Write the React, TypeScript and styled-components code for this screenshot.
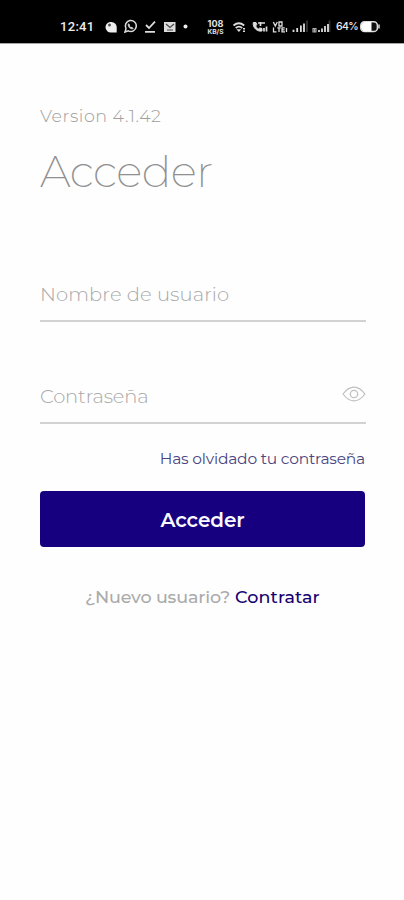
import React from "react";
import styled, { createGlobalStyle } from "styled-components";

const GlobalStyle = createGlobalStyle`
  * { box-sizing: border-box; }
  body { margin: 0; background: #fefefe; font-family: Montserrat, Inter, "Liberation Sans", sans-serif; }
`;
const Screen = styled.div`
  width: 404px;
  height: 900px;
  overflow: hidden;
  background: #fefefe;
`;
const StatusBar = styled.header`
  height: 44px;
  padding: 10px 23px 0 60px;
  background: #000;
  border-bottom: 1px solid #a5a5a5;
  color: #ededed;
  display: flex;
  align-items: flex-start;
`;
const Clock = styled.span`
  width: 35px;
  font: 500 13px/34px Roboto, sans-serif;
  letter-spacing: 0.3px;
`;
const StatusIcons = styled.svg`
  width: 235px;
  height: 33px;
  margin-left: 5px;
  flex: none;
`;
const StatusPercent = styled.span`
  width: 24px;
  margin-left: 1px;
  font: 500 10.5px/34px Inter, sans-serif;
  letter-spacing: -0.6px;
`;
const BatteryIcon = styled.svg`
  width: 21px;
  height: 33px;
  flex: none;
`;
const Main = styled.main`
  padding: 60px 38px 0 40px;
`;
const Version = styled.p`
  margin: 0;
  height: 24px;
  font-size: 17.5px;
  font-weight: 300;
  line-height: 24px;
  letter-spacing: 0.52px;
  color: #a0a0a0;
`;
const Title = styled.h1`
  margin: 11px 0 0;
  height: 64px;
  font-size: 44px;
  font-weight: 200;
  line-height: 64px;
  letter-spacing: -0.55px;
  color: #909090;
`;
const Field = styled.div<{ $gap: number }>`
  display: flex;
  align-items: center;
  justify-content: space-between;
  height: 57px;
  margin-top: ${(p) => p.$gap}px;
  padding-top: 2px;
  border-bottom: 2px solid #d2d2d2;
`;
const Label = styled.label<{ $spacing: number }>`
  font-size: 19.5px;
  font-weight: 300;
  line-height: 26px;
  letter-spacing: ${(p) => p.$spacing}px;
  color: #a8a8a8;
`;
const EyeIcon = styled.svg`
  width: 24px;
  height: 18px;
  margin: -3px 0 0;
`;
const Forgot = styled.a`
  display: block;
  margin-top: 23px;
  height: 24px;
  padding-right: 1px;
  text-align: right;
  font-size: 15.5px;
  font-weight: 400;
  line-height: 24px;
  letter-spacing: -0.22px;
  color: #4b4480;
`;
const Submit = styled.button`
  display: block;
  width: 325px;
  height: 56px;
  margin-top: 20px;
  padding: 2px 0 0;
  border: 0;
  border-radius: 4px;
  background: #160080;
  color: #fafaff;
  font-family: inherit;
  font-size: 20px;
  font-weight: 600;
  letter-spacing: -0.1px;
`;
const SignUp = styled.p`
  display: flex;
  gap: 5px;
  margin: 38px 0 0 45px;
  font-size: 17.5px;
  font-weight: 500;
  line-height: 24px;
  letter-spacing: -0.15px;
  white-space: nowrap;
  color: #ababab;
`;
const SignUpLink = styled.a`
  font-weight: 500;
  letter-spacing: 0.1px;
  color: #160070;
`;

export default function App() {
  return (
    <>
      <GlobalStyle />
      <Screen>
        <StatusBar>
          <Clock>12:41</Clock>
          <StatusIcons viewBox="0 0 235 33" fill="none" stroke="#ddd">
            <path d="M11.5 12a5.3 5.3 0 1 0 0 10.5h5.2V17a5.3 5.3 0 0 0-5.2-5Z" fill="#eee" stroke="none" />
            <circle cx="9.5" cy="15" r="1.5" fill="#555" stroke="none" />
            <path d="m25 22 1-3.4a5.5 5.5 0 1 1 2.4 2.3Z" strokeWidth="1.5" />
            <path d="M28.3 13.8c-.8 3 2.4 6 5 4.8l-1.5-1.5-1 .5-1.5-1.7.6-.9Z" fill="#ddd" strokeWidth=".7" />
            <path d="m46 15 3 3 6-6.3M45 21.8h10" strokeWidth="1.8" />
            <rect x="64.5" y="12.5" width="10.5" height="9" fill="#ddd" />
            <path d="m66 14 4 3.5 4-3.5M67 20h6" stroke="#444" strokeWidth="1.2" />
            <circle cx="85.5" cy="16.5" r="2" fill="#eee" stroke="none" />
            <g fill="#e0e0e0" stroke="none" fontFamily="Inter, sans-serif" fontWeight="700">
              <text x="107.5" y="16.5" fontSize="8.5" textLength="16" lengthAdjust="spacingAndGlyphs">108</text>
              <text x="107.5" y="23.5" fontSize="6.5" textLength="16" lengthAdjust="spacingAndGlyphs">KB/S</text>
            </g>
            <path d="M133.5 15.5q5.3-4.5 10.7 0M135.7 18q3.2-2.8 6.5 0" strokeWidth="1.8" />
            <path d="m136.5 19.3 2.4 2.8 2.3-2.8Z" fill="#ddd" stroke="none" />
            <path d="M144 18v1.5M144 20.5V22" strokeWidth="2" />
            <path d="M153.3 12.5c-1 5 4 9.5 8.7 8.5v-2.5l-2.2-.6-1.4 1c-1.4-.7-2.1-1.7-2.6-3l1-1.4-.8-2Z" fill="#ddd" />
            <path d="M158 13h7M160.5 12v4M164 21.5v-3.5M166.5 21.5v-5" strokeWidth="1.7" />
            <path d="m173.3 12 2 4 2-4M179 12h3v4h-3ZM173.5 17.5v4.3h3M179 17.5v4.5M177.3 17.8h3.5M184.8 17.8H182v4h3M182 19.8h2.5M186.5 18v4" strokeWidth="1.3" />
            <path d="M193.5 19.8v2.2M197.2 18v4M200.9 15.5v6.5M204 13.5v8.5" strokeWidth="1.8" />
            <path d="M207 10.5v11.5M229.5 10.5v11.5" stroke="#333" strokeWidth="1.8" />
            <path d="M213 18.5h3v3.5h-3ZM214.5 18v4" stroke="#aaa" strokeWidth="1.2" />
            <path d="M219 20v2M222 18.5v3.5M225 16v6M228 14v8" strokeWidth="1.8" />
          </StatusIcons>
          <StatusPercent>64%</StatusPercent>
          <BatteryIcon viewBox="0 0 21 33">
            <rect x=".8" y="11.8" width="16.6" height="9.8" rx="3.7" fill="#111" stroke="#ddd" strokeWidth="1.5" />
            <path d="M4 12h7.5v9.5H4q-3-1-3-4.7T4 12Z" fill="#fff" />
            <path d="M19 14.5v4" stroke="#ddd" strokeWidth="1.5" />
          </BatteryIcon>
        </StatusBar>
        <Main>
          <Version>Version 4.1.42</Version>
          <Title>Acceder</Title>
          <Field $gap={62}>
            <Label $spacing={0.12}>Nombre de usuario</Label>
          </Field>
          <Field $gap={45}>
            <Label $spacing={-0.15}>Contraseña</Label>
            <EyeIcon viewBox="0 0 24 18" fill="none" stroke="#bfbfbf" strokeWidth="1.2">
              <path d="M1 9q5-6.8 11-6.8T23 9q-5 6.8-11 6.8T1 9Z" />
              <circle cx="12" cy="9" r="3.7" />
            </EyeIcon>
          </Field>
          <Forgot>Has olvidado tu contraseña</Forgot>
          <Submit>Acceder</Submit>
          <SignUp>
            <span>¿Nuevo usuario?</span>
            <SignUpLink>Contratar</SignUpLink>
          </SignUp>
        </Main>
      </Screen>
    </>
  );
}
